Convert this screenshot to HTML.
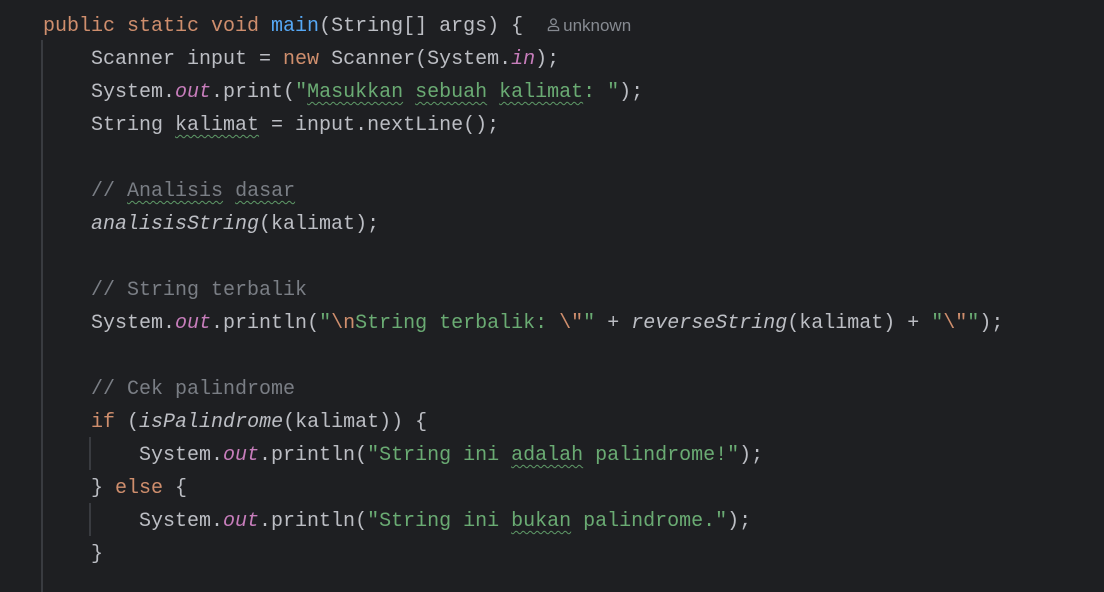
<!DOCTYPE html>
<html><head><meta charset="utf-8"><style>
html,body{margin:0;padding:0;background:#1e1f22;width:1104px;height:592px;overflow:hidden}
.code{position:absolute;left:43px;top:9px;font-family:"Liberation Mono","DejaVu Sans Mono",monospace;font-size:20px;line-height:33px;color:#bcbec4;white-space:pre}
.k{color:#cf8e6d}.f{color:#56a8f5}.s{color:#6aab73}.p{color:#c77dbb;font-style:italic}.c{color:#7a7e85}.i{font-style:italic}
.t{text-decoration:underline wavy #5f9a68;text-decoration-thickness:1px;text-underline-offset:4px}
.g{position:absolute;background:#393b40;width:2px}
.u{font-family:"Liberation Sans",sans-serif;font-size:17px;color:#868a91}
</style></head><body>
<div class="g" style="left:41px;top:40px;height:552px"></div>
<div class="g" style="left:89px;top:437px;height:33px"></div>
<div class="g" style="left:89px;top:503px;height:33px"></div>
<div class="code"><span class="k">public static void </span><span class="f">main</span>(String[] args) {  <span class="u"><svg width="13" height="15" viewBox="0 0 14 15" style="vertical-align:-1px;margin-right:3px"><circle cx="7" cy="4.5" r="3" fill="none" stroke="#868a91" stroke-width="1.4"/><path d="M1.5 14v-1.5a4 3 0 0 1 4-3h3a4 3 0 0 1 4 3V14z" fill="none" stroke="#868a91" stroke-width="1.4"/></svg>unknown</span>
    Scanner input = <span class="k">new </span>Scanner(System.<span class="p">in</span>);
    System.<span class="p">out</span>.print(<span class="s">"<span class="t">Masukkan</span> <span class="t">sebuah</span> <span class="t">kalimat</span>: "</span>);
    String <span class="t">kalimat</span> = input.nextLine();

    <span class="c">// <span class="t">Analisis</span> <span class="t">dasar</span></span>
    <span class="i">analisisString</span>(kalimat);

    <span class="c">// String terbalik</span>
    System.<span class="p">out</span>.println(<span class="s">"<span class="k">\n</span>String terbalik: <span class="k">\"</span>"</span> + <span class="i">reverseString</span>(kalimat) + <span class="s">"<span class="k">\"</span>"</span>);

    <span class="c">// Cek palindrome</span>
    <span class="k">if </span>(<span class="i">isPalindrome</span>(kalimat)) {
        System.<span class="p">out</span>.println(<span class="s">"String ini <span class="t">adalah</span> palindrome!"</span>);
    } <span class="k">else </span>{
        System.<span class="p">out</span>.println(<span class="s">"String ini <span class="t">bukan</span> palindrome."</span>);
    }
</div>
</body></html>
